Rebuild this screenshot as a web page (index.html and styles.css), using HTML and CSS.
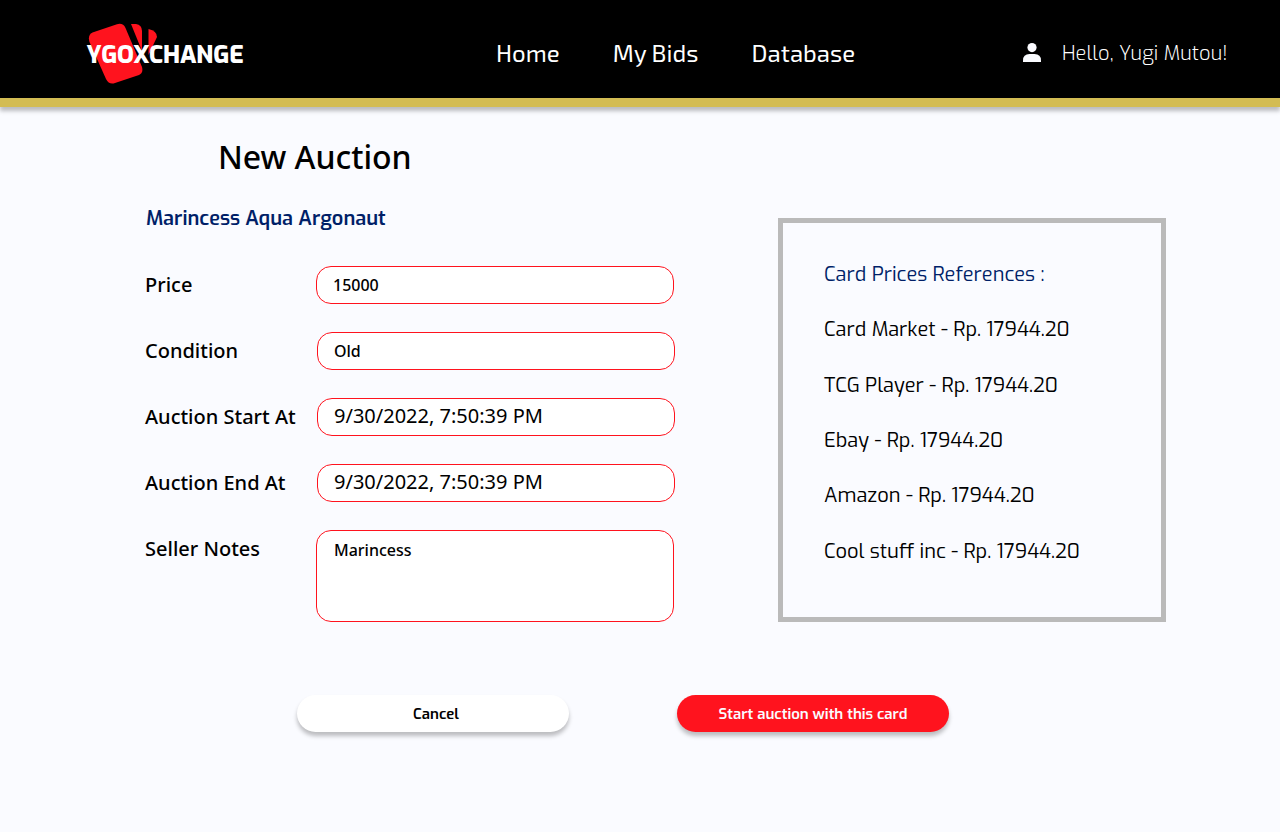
FILE: index.html
```
<!DOCTYPE html>
<html lang="en">
<head>
<meta charset="utf-8">
<title>YGOXchange - New Auction</title>
<link rel="stylesheet" href="styles.css">
</head>
<body>
<header class="topbar">
  <a class="logo">
    <svg class="logo-mark" width="72" height="62" viewBox="0 0 72 62" aria-hidden="true">
      <path d="M6.500 10.500 L31 2.200 Q37 0.500 39.500 6 L56 45 Q57.500 51 53 53 L29 61 Q23 63 20 57 L3.500 20 Q1.500 13 6.500 10.500Z"/>
      <path d="M45 2 L50 2 Q56 3 56 9 L56 29Z"/>
      <path d="M62.500 7 Q71 9 71 15 L62.500 33Z"/>
    </svg>
    <span class="logo-name">YGOXCHANGE</span>
  </a>
  <nav class="nav"><a>Home</a><a>My Bids</a><a>Database</a></nav>
  <div class="user">
    <svg width="18" height="19" viewBox="0 0 18 19" aria-hidden="true"><circle cx="9" cy="4.6" r="4.6"/><path d="M0 19v-1.5Q0 11 6.5 11h5Q18 11 18 17.500V19Z"/></svg>
    <span class="greeting">Hello, Yugi Mutou!</span>
  </div>
</header>
<main class="page">
  <h1 class="title">New Auction</h1>
  <div class="columns">
    <form class="form">
      <h2 class="card-name">Marincess Aqua Argonaut</h2>
      <div class="row"><label>Price</label><div class="field offset">15000</div></div>
      <div class="row"><label>Condition</label><div class="field">Old</div></div>
      <div class="row"><label>Auction Start At</label><div class="field date">9/30/2022, 7:50:39 PM</div></div>
      <div class="row"><label>Auction End At</label><div class="field date">9/30/2022, 7:50:39 PM</div></div>
      <div class="row"><label>Seller Notes</label><div class="field offset notes">Marincess</div></div>
    </form>
    <aside class="prices">
      <p class="prices-title">Card Prices References :</p>
      <p>Card Market - Rp. 17944.20</p>
      <p>TCG Player - Rp. 17944.20</p>
      <p>Ebay - Rp. 17944.20</p>
      <p>Amazon - Rp. 17944.20</p>
      <p>Cool stuff inc - Rp. 17944.20</p>
    </aside>
  </div>
  <div class="actions">
    <button class="btn cancel">Cancel</button>
    <button class="btn start">Start auction with this card</button>
  </div>
</main>
</body>
</html>
```
FILE: styles.css
```
* { box-sizing: border-box; }
body { margin: 0; height: 832px; overflow: hidden; background: #fafbff; color: #000; font-family: "Noto Sans", sans-serif; }
h1, h2, p { margin: 0; font-weight: 400; }
.topbar { display: flex; height: 107px; background: #000; border-bottom: 9px solid #d3bc53; box-shadow: 0 4px 4px rgba(0,0,0,.25); color: #fff; }
.logo { position: relative; width: 496px; padding: 37px 0 0 86.5px; }
.logo-mark { position: absolute; left: 86px; top: 22px; fill: #ff131e; }
.logo-name { position: relative; display: inline-block; font: 800 24px/36px Exo, Roboto, sans-serif; letter-spacing: -.14px; white-space: nowrap; }
.nav { display: flex; gap: 53px; width: 526px; padding-top: 36px; font: 400 24px/33px "Exo 2", Exo, "Noto Sans", sans-serif; letter-spacing: .05px; white-space: nowrap; }
.user { display: flex; gap: 21px; padding-top: 43px; font: 300 20px/20px Exo, Roboto, sans-serif; letter-spacing: .05px; white-space: nowrap; }
.user svg { fill: #fafbff; margin-left: 1px; }
.greeting { padding-top: 1px; }
.title { padding: 28px 0 0 218px; font-size: 32px; line-height: 44px; font-weight: 500; letter-spacing: -.04px; }
.columns { display: flex; padding: 24px 0 0 145px; gap: 103px; }
.form { width: 530px; }
.card-name { height: 63px; padding: 1px 0 0 1px; font: 600 20px/30px Exo, Roboto, sans-serif; color: #001f68; }
.row { display: flex; justify-content: space-between; margin-bottom: 28px; }
label { font-size: 20px; line-height: 38px; font-weight: 500; }
.field { width: 358px; height: 38px; border: 1px solid #ff131e; border-radius: 15px; background: #fff; padding-left: 16px; font-size: 16px; line-height: 36px; font-weight: 500; }
.offset { margin-right: 1px; }
.date { font-size: 20px; font-weight: 400; line-height: 34px; }
.notes { height: 92px; padding: 1px 0 0 17px; }
.prices { width: 388px; height: 404px; margin-top: 15px; border: 5px solid #bababa; padding: 38px 0 0 41px; font: 300 20px/27px Exo, Roboto, sans-serif; }
.prices p { height: 55.35px; }
.prices-title { color: #001f68; }
.actions { display: flex; gap: 108px; padding: 45px 0 0 297px; }
.btn { width: 272px; height: 37px; border: 0; border-radius: 19px; background: #fff; color: #000; font: 600 15px/36px Exo, Roboto, sans-serif; padding: 1px 0 0; box-shadow: 0 4px 4px rgba(0,0,0,.25); }
.cancel { padding-left: 6px; }
.start { background: #ff131e; color: #fafbff; }
```
